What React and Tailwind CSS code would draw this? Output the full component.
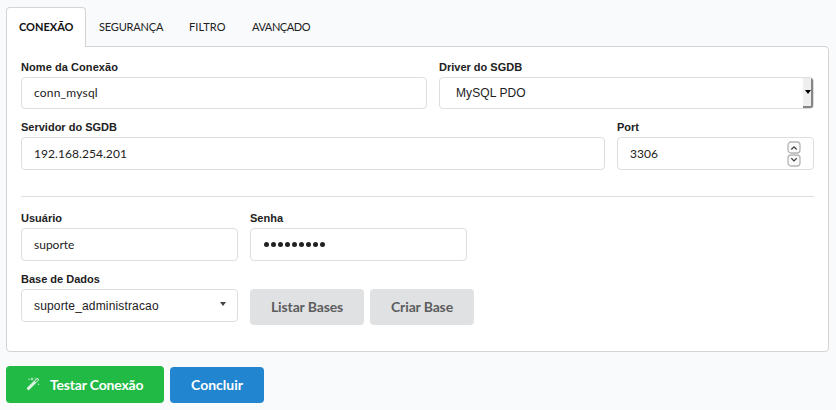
import React from "react";

function Label({ children, className = "" }) {
  return (
    <div
      className={`h-[20px] whitespace-nowrap font-['Liberation_Sans',Arial,sans-serif] text-[11px] leading-[20px] font-bold text-[#212121] ${className}`}
    >
      {children}
    </div>
  );
}

function Box({ children, className = "" }) {
  return (
    <div
      className={`flex items-center rounded-[4px] border border-[#dededf] bg-white pl-[12px] text-[12px] whitespace-nowrap text-[#212121] ${className}`}
    >
      {children}
    </div>
  );
}

function Stepper() {
  return (
    <svg width="14" height="26" viewBox="0 0 14 26" fill="none" className="mr-[12px] ml-auto">
      <rect x="1" y="1" width="12" height="11" rx="3" fill="#fafafa" stroke="#b5b5b5" strokeWidth="1.3" />
      <rect x="1" y="14" width="12" height="11" rx="3" fill="#fafafa" stroke="#b5b5b5" strokeWidth="1.3" />
      <path d="M4.3 8.500 7 5.800l2.700 2.700M4.300 17.200 7 19.900l2.700-2.700" stroke="#444" strokeWidth="1.3" />
    </svg>
  );
}

function Wand() {
  return (
    <svg width="14" height="14" viewBox="0 0 14 14" fill="#fff" className="-mt-[2px] opacity-85">
      <path
        fillRule="evenodd"
        d="M10.7 1.2a.8.8 0 0 1 1.1 0l1 1a.8.8 0 0 1 0 1.1l-9.7 9.6a.8.8 0 0 1-1.1 0l-1-1a.8.8 0 0 1 0-1.1zM11.2 2 8.8 4.4l.9.9 2.4-2.4z"
      />
      <path d="m3 1 .3.9.9.3-.9.3L3 3.400l-.3-.9-.9-.3.9-.3zM6 0l.5 1.500 1.500.5-1.500.5L6 4l-.5-1.500L4 2l1.500-.5zM12.500 6l.3.9.9.3-.9.3-.3.9-.3-.9-.9-.3.9-.3zM9 .2l.2.6.6.2-.6.2-.2.600-.2-.6L8.200 1l.6-.2z" />
    </svg>
  );
}

export default function App() {
  return (
    <div className="h-[410px] w-[836px] overflow-hidden bg-[#f9fafc] pt-[7px] pl-[6px] font-[Lato,sans-serif] text-[#212121]">
      <div className="relative z-10 flex h-[40px] text-[11px] leading-[37px] whitespace-nowrap">
        <div className="w-[80px] rounded-t-[4px] border border-b-0 border-[#d4d4d5] bg-white pl-[12px] font-bold text-[#111]">
          <span>CONEXÃO</span>
        </div>
        <div className="w-[90px] pt-px pl-[13px] tracking-[-0.18px]"><span>SEGURANÇA</span></div>
        <div className="w-[63px] pt-px pl-[13px] tracking-[0.1px]"><span>FILTRO</span></div>
        <div className="pt-px pl-[13px] tracking-[-0.42px]"><span>AVANÇADO</span></div>
      </div>
      <div className="-mt-px h-[306px] w-[823px] rounded-b-[4px] rounded-tr-[4px] border border-[#d4d4d5] bg-white px-[14px] pt-[10px]">
        <div className="flex gap-[12px]">
          <div className="w-[406px]">
            <Label className="tracking-[0.07px]">Nome da Conexão</Label>
            <Box className="h-[32px] tracking-[0.2px]"><span>conn_mysql</span></Box>
          </div>
          <div className="w-[375px]">
            <Label>Driver do SGDB</Label>
            <Box className="h-[32px] overflow-hidden pl-[16px] font-['Liberation_Sans',Arial,sans-serif] tracking-[0.1px]">
              <span>MySQL PDO</span>
              <div className="ml-auto flex h-[30px] w-[10px] items-center justify-end border-r-2 border-b-2 border-[#858585] bg-[#efefef]">
                <svg width="6" height="4" viewBox="0 0 6 4"><path d="M0 0h6L3 4z" fill="#000" /></svg>
              </div>
            </Box>
          </div>
        </div>
        <div className="mt-[8px] flex gap-[12px]">
          <div className="w-[584px]">
            <Label>Servidor do SGDB</Label>
            <Box className="h-[33px] tracking-[0.06px]"><span>192.168.254.201</span></Box>
          </div>
          <div className="w-[197px]">
            <Label>Port</Label>
            <Box className="h-[33px]"><span>3306</span><Stepper /></Box>
          </div>
        </div>
        <div className="mt-[26px] h-px bg-[#dededf]" />
        <div className="mt-[11px] flex gap-[12px]">
          <div className="w-[217px]">
            <Label>Usuário</Label>
            <Box className="h-[33px]"><span>suporte</span></Box>
          </div>
          <div className="w-[217px]">
            <Label>Senha</Label>
            <Box className="h-[33px] gap-[2px] pl-[13px]">
              {Array.from({ length: 9 }, (_, i) => (
                <i key={i} className="size-[5px] rounded-full bg-[#212121]" />
              ))}
            </Box>
          </div>
        </div>
        <div className="mt-[8px] flex">
          <div className="w-[217px]">
            <Label>Base de Dados</Label>
            <Box className="h-[33px] font-['Liberation_Sans',Arial,sans-serif] tracking-[0.16px]">
              <span>suporte_administracao</span>
              <svg width="6" height="4" viewBox="0 0 6 4" className="mr-[11px] mb-[3px] ml-auto"><path d="M0 0h6L3 4z" fill="#444" /></svg>
            </Box>
          </div>
          <div className="mt-[20px] ml-[12px] flex gap-[6px] text-[14px] leading-[35px] font-bold tracking-[-0.13px] text-[#5c5d5e]">
            <div className="h-[36px] w-[114px] rounded-[4px] bg-[#e0e1e2] text-center">Listar Bases</div>
            <div className="h-[36px] w-[104px] rounded-[4px] bg-[#e0e1e2] text-center">Criar Base</div>
          </div>
        </div>
      </div>
      <div className="mt-[14px] flex items-end gap-[6px] text-[14px] leading-[35px] font-bold text-white">
        <div className="flex h-[37px] w-[158px] items-center rounded-[4px] bg-[#21ba45] pl-[20px] whitespace-nowrap">
          <Wand />
          <span className="-mt-px ml-[10px] tracking-[-0.18px]">Testar Conexão</span>
        </div>
        <div className="h-[36px] w-[94px] rounded-[4px] bg-[#2185d0] text-center">Concluir</div>
      </div>
    </div>
  );
}
